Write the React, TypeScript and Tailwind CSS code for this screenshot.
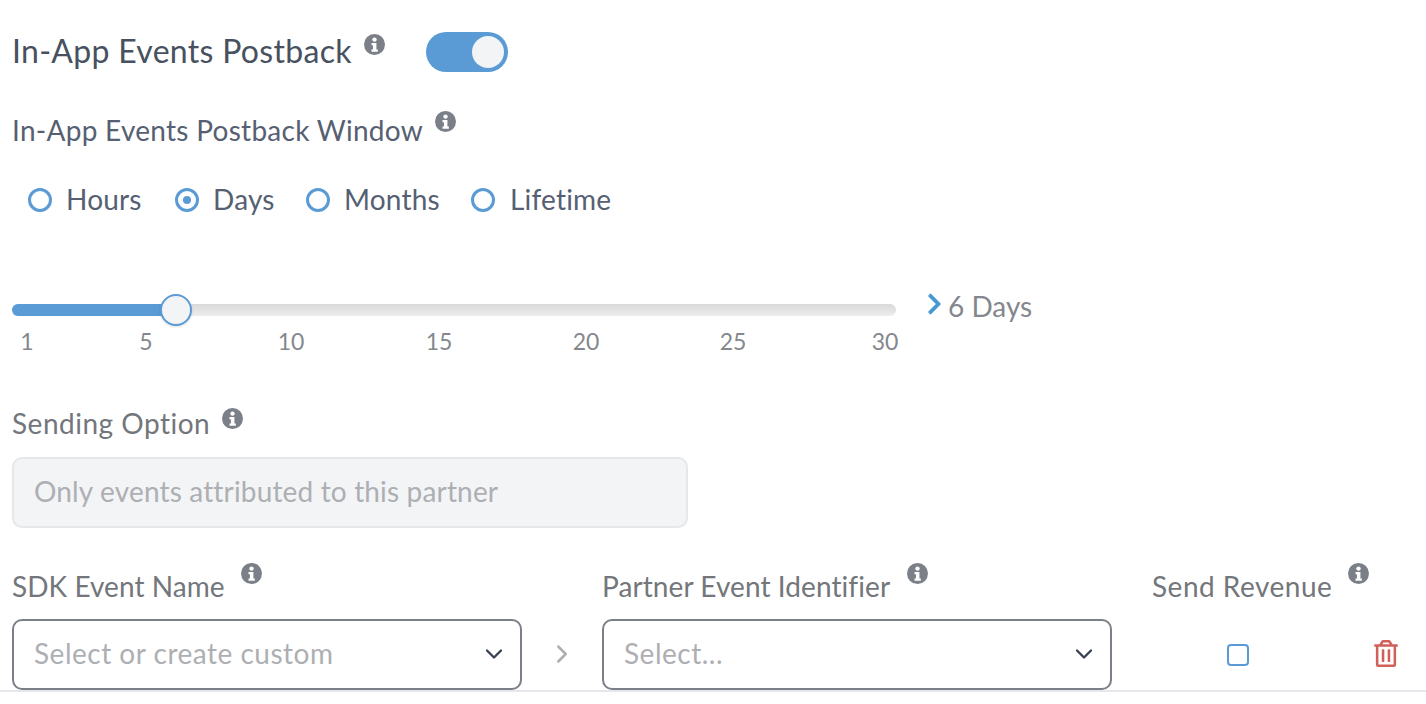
import React from 'react';
import { FaChevronRight, FaRegTrashAlt } from 'react-icons/fa';
import { ChevronDown, ChevronRight } from 'lucide-react';

const ticks = [
  { label: '1', margin: 'ml-0' },
  { label: '5', margin: 'ml-[89px]' },
  { label: '10', margin: 'ml-[115px]' },
  { label: '15', margin: 'ml-[118px]' },
  { label: '20', margin: 'ml-[117px]' },
  { label: '25', margin: 'ml-[117px]' },
  { label: '30', margin: 'ml-[122px]' },
];

function InfoIcon({ className }: { className: string }) {
  return (
    <svg viewBox="0 0 24 24" className={`w-[21px] h-[21px] shrink-0 text-[#7b7f87] ${className}`}>
      <circle cx="12" cy="12" r="12" fill="currentColor" />
      <circle cx="12" cy="6.4" r="2.5" fill="#fff" />
      <path d="M8.6 10.2h5.6v7.6h1.6v2.6H8.6v-2.6h1.6v-5H8.6z" fill="#fff" />
    </svg>
  );
}

function Radio({ label, checked, className }: { label: string; checked?: boolean; className: string }) {
  return (
    <label className={`flex items-center ${className}`}>
      <span className="flex items-center justify-center w-[24px] h-[24px] rounded-full border-[3px] border-[#5a9bd5] bg-white">
        {checked && <span className="w-[8px] h-[8px] rounded-full bg-[#5a9bd5]" />}
      </span>
      <span className="text-[28px] leading-none tracking-[0.2px] text-[#566072] mb-[2px]">{label}</span>
    </label>
  );
}

function Select({ placeholder, className }: { placeholder: string; className: string }) {
  return (
    <div className={`flex items-center justify-between h-[71px] rounded-[10px] border-2 border-[#7b7f87] pl-[20px] pr-[12px] ${className}`}>
      <span className="text-[28px] tracking-[0.5px] text-[#adafb3] mb-[4px]">{placeholder}</span>
      <ChevronDown className="w-[28px] h-[28px] mb-[2px] text-[#374151]" strokeWidth={2} />
    </div>
  );
}

export default function App() {
  return (
    <div className="relative w-[1426px] h-[704px] overflow-hidden bg-white pl-[12px] font-['Lato','Open_Sans',sans-serif] font-normal">
      {/* postback toggle */}
      <div className="flex items-center h-[40px] mt-[32px]">
        <h2 className="text-[32px] leading-none tracking-[0.3px] text-[#475160] mb-[2px]">In-App Events Postback</h2>
        <InfoIcon className="ml-[12px] mb-[16px]" />
        <div className="ml-[41px] flex items-center justify-end w-[82px] h-[40px] rounded-full bg-[#5a9bd5] pr-[4px]">
          <div className="w-[32px] h-[32px] rounded-full bg-[#f3f4f6]" />
        </div>
      </div>

      <div className="flex items-center h-[32px] mt-[42px]">
        <span className="text-[28px] leading-none tracking-[0.28px] text-[#566072]">In-App Events Postback Window</span>
        <InfoIcon className="ml-[12px] mb-[18px]" />
      </div>

      <div className="flex items-center h-[32px] mt-[38px] pl-[16px]">
        <Radio label="Hours" className="gap-[14px] w-[147px]" />
        <Radio label="Days" checked className="gap-[14px] w-[131px]" />
        <Radio label="Months" className="gap-[14px] w-[165px]" />
        <Radio label="Lifetime" className="gap-[15px]" />
      </div>

      {/* slider */}
      <div className="flex items-start mt-[74px]">
        <div className="w-[884px]">
          <div className="relative h-[12px] mt-[14px] rounded-full bg-linear-to-b from-[#d9d9d9] to-[#ededed]">
            <div className="h-full w-[164px] rounded-l-full bg-[#5a9bd5]" />
            <div className="absolute left-[148px] top-[-10px] w-[32px] h-[32px] rounded-full border-2 border-[#5a9bd5] bg-[#f3f4f6] shadow-sm" />
          </div>
          <div className="flex mt-[13px]">
            {ticks.map((t) => (
              <span key={t.label} className={`${t.margin} w-[30px] shrink-0 text-center text-[23px] leading-[24px] text-[#84878d]`}>
                {t.label}
              </span>
            ))}
          </div>
        </div>
        <div className="flex items-center ml-[31px] mt-0 h-[32px]">
          <FaChevronRight className="w-[15px] h-[26px] text-[#4a98d3] mb-[4px]" />
          <span className="ml-[6px] text-[28px] leading-none text-[#84878d]">6 Days</span>
        </div>
      </div>

      {/* sending option */}
      <div className="flex items-center h-[32px] mt-[54px]">
        <span className="text-[28px] leading-none tracking-[0.5px] text-[#73767b]">Sending Option</span>
        <InfoIcon className="ml-[12px] mb-[10px]" />
      </div>
      <div className="flex items-center w-[676px] h-[71px] mt-[18px] pl-[20px] rounded-[10px] border-2 border-[#e5e7eb] bg-[#f3f4f6]">
        <span className="text-[28px] tracking-[0.16px] text-[#adafb3] mb-[3px]">Only events attributed to this partner</span>
      </div>

      {/* event mapping */}
      <div className="flex items-start mt-[35px] h-[32px]">
        <div className="flex items-center w-[590px]">
          <span className="text-[28px] leading-[32px] tracking-[0.05px] text-[#73767b]">SDK Event Name</span>
          <InfoIcon className="ml-[16px] mb-[24px]" />
        </div>
        <div className="flex items-center w-[550px]">
          <span className="text-[28px] leading-[32px] tracking-[0.08px] text-[#73767b]">Partner Event Identifier</span>
          <InfoIcon className="ml-[17px] mb-[24px]" />
        </div>
        <div className="flex items-center">
          <span className="text-[28px] leading-[32px] tracking-[0.5px] text-[#73767b]">Send Revenue</span>
          <InfoIcon className="ml-[16px] mb-[24px]" />
        </div>
      </div>
      <div className="flex items-center mt-[24px]">
        <Select placeholder="Select or create custom" className="w-[510px]" />
        <div className="flex justify-center w-[80px]">
          <ChevronRight className="w-[30px] h-[30px] mb-[2px] text-[#adafb3]" strokeWidth={2} />
        </div>
        <Select placeholder="Select..." className="w-[510px]" />
        <div className="flex justify-center w-[252px]">
          <div className="w-[22px] h-[22px] rounded-[4px] border-2 border-[#5a9bd5] bg-white" />
        </div>
        <FaRegTrashAlt className="ml-[10px] w-[24px] h-[27px] mb-[2px] text-[#d0605a]" />
      </div>
      <div className="absolute left-0 right-0 top-[690px] h-[2px] bg-[#e5e7eb]" />
    </div>
  );
}
